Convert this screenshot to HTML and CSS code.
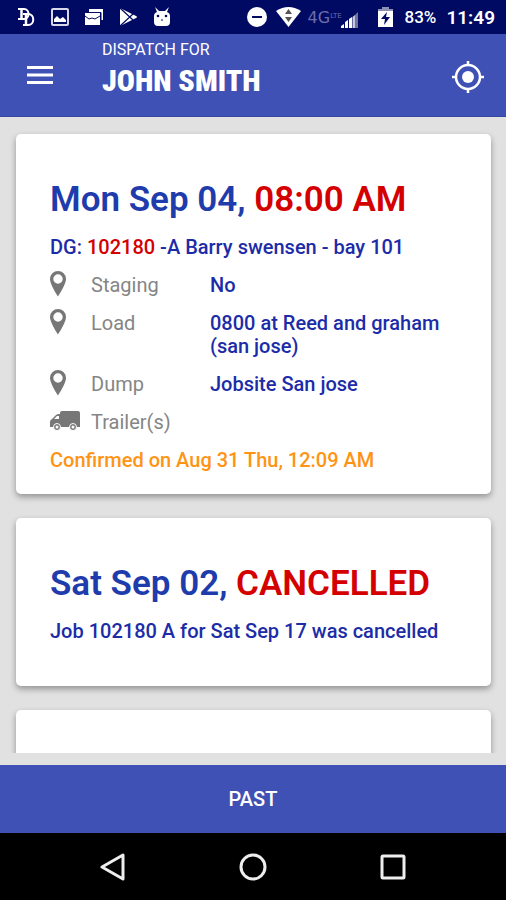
FILE: index.html
```html
<!DOCTYPE html>
<html lang="en">
<head>
<meta charset="utf-8">
<meta name="viewport" content="width=device-width, initial-scale=1">
<title>Dispatch</title>
<link rel="stylesheet" href="styles.css">
</head>
<body>
<svg class="sprite" aria-hidden="true">
  <symbol id="pin" viewBox="0 0 16 26"><path fill-rule="evenodd" d="M8 0a8 8 0 0 0-8 8c0 5.500 8 17.500 8 17.500S16 13.500 16 8a8 8 0 0 0-8-8zm0 3.300a4.700 4.700 0 1 1 0 9.400 4.700 4.700 0 0 1 0-9.400z"/></symbol>
</svg>
<div class="app">
  <div class="status">
    <div class="notices">
      <svg width="18" height="20" viewBox="0 0 18 20" fill="none" stroke="#fff"><path stroke-width="2.500" d="M4.500 2v11"/><path stroke-width="2" d="M1 2h6c6 0 6 10 0 10H1"/><path stroke-width="2.500" d="M9 7v11"/><path stroke-width="2" d="M6 7h5c7 0 7 11 0 11H6"/></svg>
      <svg width="18" height="20" viewBox="0 0 18 20"><rect x="1" y="2" width="16" height="16" rx="1" fill="none" stroke="#d8d8e8" stroke-width="2"/><path fill="#fff" d="M3 15v-3l3-3 3 3 3-2 3 3v2z"/></svg>
      <svg width="18" height="20" viewBox="0 0 18 20"><path fill="#fff" d="M4 2h14v11h-2V5H4z"/><path fill="#fff" d="M0 6h15v12H0z"/><path fill="none" stroke="#000a63" stroke-width="1" d="M0 9l4 3 3-1 3 1 5-3M3 5.500h13V14"/></svg>
      <svg width="18" height="20" viewBox="0 0 18 20"><path fill="#fff" d="M1 1l16 8q2 1 0 2L1 19z"/><path stroke="#000a63" stroke-width="1.200" fill="none" d="M1 1l13 12M1 19L14 7"/></svg>
      <svg width="18" height="20" viewBox="0 0 18 20"><path fill="#fff" d="M1 9q0-3 3-4L2 0l4 4h6l4-4-2 5q3 1 3 4v6q0 4-4 4H5q-4 0-4-4z"/><circle cx="5" cy="9" r="1.300" fill="#000a63"/><circle cx="13" cy="9" r="1.300" fill="#000a63"/><path stroke="#000a63" d="M8 13h2"/></svg>
    </div>
    <div class="signals">
      <svg width="20" height="20" viewBox="0 0 20 20"><circle cx="10" cy="10" r="10" fill="#fff"/><path stroke="#000a63" stroke-width="2" d="M5 10h10"/></svg>
      <svg class="wifi" width="25" height="20" viewBox="0 0 25 20"><path fill="#fff" d="M0 4q12.500-8 25 0L12.500 20z"/><path fill="#555" d="M12.500 2L16 7H9zM9 10h7l-3.500 5z"/></svg>
      <span class="network">4G<small>LTE</small></span>
      <svg class="bars" width="17" height="16" viewBox="0 0 17 16"><path fill="#fff" d="M0 16v-2l3-2v4zM4 16v-6l3-2v8zM8 16V7l3-2v11z"/><path fill="#c9c9dc" d="M11.500 16V5L14 3v13z"/><path fill="#71749f" d="M14 16V3l3-3v16z"/></svg>
      <svg class="battery" width="15" height="20" viewBox="0 0 15 20"><path fill="#8d90b5" d="M4 0h7v2h4v3H0V2h4z"/><path fill="#fff" d="M0 4h15v16H0z"/><path fill="#000a63" d="M9 5l-6 7h4l-1 6 6-8H8z"/></svg>
      <span class="percent">83%</span>
      <span class="clock">11:49</span>
    </div>
  </div>
  <header class="bar">
    <button class="icon-button" aria-label="Menu"><svg width="26" height="18" viewBox="0 0 26 18"><path stroke="#fff" stroke-width="3" d="M0 1.500h26M0 9h26M0 16.500h26"/></svg></button>
    <div class="title"><span class="for">DISPATCH FOR</span><h1>JOHN SMITH</h1></div>
    <button class="icon-button" aria-label="Locate"><svg width="32" height="36" viewBox="0 -4 32 36"><g fill="none" stroke="#fff" stroke-width="2.500"><circle cx="16" cy="16" r="12"/><path d="M16 0v5M16 27v5M0 16h5M27 16h5"/></g><circle cx="16" cy="16" r="6" fill="#fff"/></svg></button>
  </header>
  <main class="list">
    <article class="card">
      <h2>Mon Sep 04, <em>08:00 AM</em></h2>
      <p>DG: <em>102180</em> -A Barry swensen - bay 101</p>
      <dl>
        <div><dt><svg class="pin"><use href="#pin"/></svg>Staging</dt><dd>No</dd></div>
        <div><dt><svg class="pin"><use href="#pin"/></svg>Load</dt><dd>0800 at Reed and graham (san jose)</dd></div>
        <div><dt><svg class="pin"><use href="#pin"/></svg>Dump</dt><dd>Jobsite San jose</dd></div>
        <div><dt><svg class="truck" viewBox="0 0 30 20"><path fill-rule="evenodd" d="M12 0h16q2 0 2 2v14H0v-5q0-2 2-3l4-4q1-1 3-1h1V2q0-2 2-2zM4 8h5V5H7z"/><g fill="#777" stroke="#fff"><circle cx="7" cy="16" r="3.500"/><circle cx="23" cy="16" r="3.500"/></g><g fill="#fff"><circle cx="7" cy="16" r="1.500"/><circle cx="23" cy="16" r="1.500"/></g></svg>Trailer(s)</dt><dd></dd></div>
      </dl>
      <p class="confirmed">Confirmed on Aug 31 Thu, 12:09 AM</p>
    </article>
    <article class="card brief">
      <h2>Sat Sep 02, <em>CANCELLED</em></h2>
      <p>Job 102180 A for Sat Sep 17 was cancelled</p>
    </article>
    <article class="card"></article>
  </main>
  <button class="past">PAST</button>
  <nav class="system">
    <button aria-label="Back"><svg width="28" height="28" viewBox="0 0 28 28"><path d="M24 2v24L3 14z"/></svg></button>
    <button aria-label="Home"><svg width="28" height="28" viewBox="0 0 28 28"><circle cx="14" cy="14" r="12"/></svg></button>
    <button aria-label="Recent apps"><svg width="28" height="28" viewBox="0 0 28 28"><rect x="3" y="3" width="22" height="22" rx="1"/></svg></button>
  </nav>
</div>
</body>
</html>
```
FILE: styles.css
```css
* { box-sizing: border-box; }
body { margin: 0; font-family: Roboto, "Liberation Sans", sans-serif; background: #e1e1e1; }
h1, h2, p, dl, dd { margin: 0; }
em { font-style: normal; color: #d40000; }
button { border: 0; padding: 0; background: none; font: inherit; color: #fff; cursor: pointer; }
svg { display: block; flex: none; }
.sprite { position: absolute; width: 0; height: 0; }
.app { display: flex; flex-direction: column; height: 100vh; }

.status { display: flex; justify-content: space-between; align-items: center; height: 34px; flex: none; padding: 0 11px 0 17px; background: #000a63; color: #fff; }
.notices { display: flex; gap: 16px; }
.signals { display: flex; align-items: center; }
.wifi { margin: 0 7px 0 9px; }
.network { display: flex; align-self: flex-start; width: 33px; padding-top: 4px; font-family: "DejaVu Sans", sans-serif; font-size: 16px; line-height: 16px; color: #6a6eac; }
.network small { font-size: 7px; line-height: 12px; }
.bars { margin: 6px 20px 0 0; }
.percent { margin: 0 10px 0 12px; font-size: 17px; font-weight: 500; }
.clock { font-size: 19px; font-weight: 600; }

.bar { display: flex; align-items: center; flex: none; height: 83px; padding: 0 22px 0 27px; background: #3f51b5; color: #fff; border-bottom: 1px solid #3445a5; }
.bar .title { flex: 1; padding: 0 0 8px 49px; }
.for { display: block; font-size: 16px; line-height: 20px; }
h1 { font-family: "Roboto Condensed", "Liberation Sans Narrow", "Liberation Sans", sans-serif; font-size: 30px; line-height: 42px; font-weight: 900; }

.list { flex: 1; min-height: 0; overflow: hidden; margin-bottom: 12px; padding: 17px 15px 0 16px; }
.card { min-height: 168px; margin-bottom: 24px; padding: 45px 34px 22px; border-radius: 5px; background: #fff; color: #1c2ca8; font-size: 20px; line-height: 23px; font-weight: 500; box-shadow: 0 3px 6px rgba(0, 0, 0, .35); }
.brief { padding-bottom: 43px; }
h2 { margin-bottom: 15px; font-size: 35px; line-height: 42px; font-weight: 600; color: #1f3cac; }
dl div { display: flex; margin-top: 15px; }
dt { display: flex; width: 160px; flex: none; font-weight: 400; color: #858585; }
.pin { width: 16px; height: 26px; margin: -3px 25px 0 0; fill: #777; }
.truck { width: 30px; height: 20px; margin: 0 11px 0 0; fill: #777; }
.confirmed { margin-top: 15px; color: #ff9314; }

.past { flex: none; height: 68px; background: #3f51b5; font-size: 20px; font-weight: 500; }
.system { display: flex; justify-content: center; align-items: center; gap: 112px; flex: none; height: 67px; background: #000; }
.system svg { fill: none; stroke: #eee; stroke-width: 3; stroke-linejoin: round; }
```
